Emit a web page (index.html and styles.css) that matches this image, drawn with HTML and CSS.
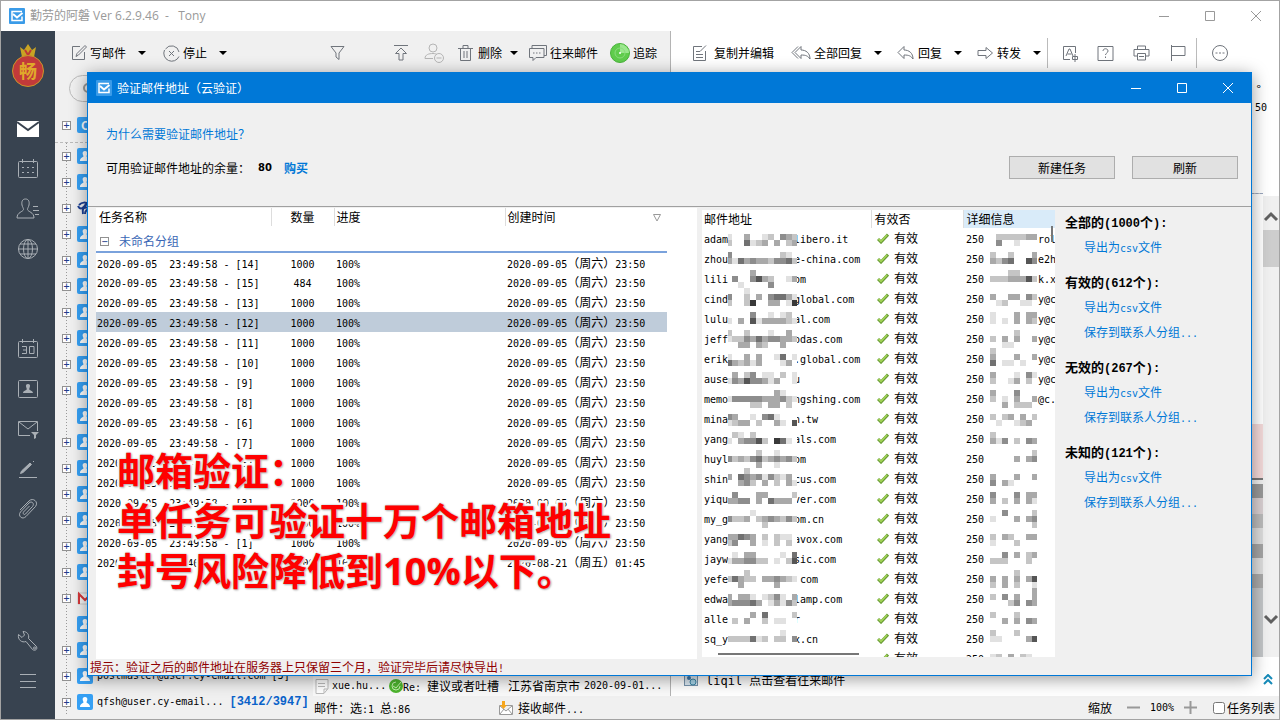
FILE: index.html
```html
<!DOCTYPE html>
<html lang="zh-CN">
<head>
<meta charset="utf-8">
<title>验证邮件地址（云验证）</title>
<link rel="stylesheet" href="styles.css">
</head>
<body>
<svg class="defs" aria-hidden="true">
  <defs>
    <symbol id="brand" viewBox="0 0 16 16"><rect width="16" height="16" rx="1" fill="#3a9be8"/><path d="M13 3.500H3v9h10V8.500" fill="none" stroke="#fff" stroke-width="1.500"/><path d="M4 6l4 3.500L13.500 5" fill="none" stroke="#fff" stroke-width="2"/></symbol>
    <symbol id="caret" viewBox="0 0 8 4"><path d="M0 0h8L4 4z" fill="#000"/></symbol>
    <symbol id="user" viewBox="0 0 16 16"><rect width="16" height="16" rx="2" fill="#36a0f4"/><path d="M8 3c2 0 2.600 1.400 2.300 3-.2 1-.6 1.500-.9 2.300.3 1 3.600 1.500 3.600 4.700H3c0-3.200 3.300-3.700 3.600-4.700-.3-.8-.7-1.300-.9-2.300C5.400 4.400 6 3 8 3z" fill="#fff"/></symbol>
    <symbol id="tick" viewBox="0 0 12 11"><path d="M1 6l3 3 7-7.500" fill="none" stroke="#6a9c35" stroke-width="3"/><path d="M1.500 6L4 8.500l6-6.500" fill="none" stroke="#a5d65a" stroke-width="1.500"/></symbol>
  </defs>
</svg>
<div class="app">
  <header class="titlebar">
    <svg class="i16"><use href="#brand"/></svg>
    <span class="app-name">勤劳的阿磐 Ver 6.2.9.46&nbsp; -&nbsp;&nbsp; Tony</span>
    <div class="wins">
      <button aria-label="最小化"><svg width="12" height="12"><path d="M1 6.500h10"/></svg></button>
      <button aria-label="最大化"><svg width="12" height="12"><path d="M1.500 1.500h9v9h-9z"/></svg></button>
      <button aria-label="关闭"><svg width="12" height="12"><path d="M1 1l10 10M11 1L1 11"/></svg></button>
    </div>
  </header>
  <div class="main">
    <nav class="side">
      <div class="logo">
        <svg width="18" height="14" viewBox="0 0 18 14"><path d="M1 4l4 3 4-6 4 6 4-3-2 10H3z" fill="#c9a423"/><path d="M6 7l3 5 3-5" fill="none" stroke="#c03a35" stroke-width="2"/></svg>
        <span>畅</span>
      </div>
      <button aria-label="邮件"><svg width="24" height="18" viewBox="0 0 24 18"><path d="M1 1h22v16H1z" fill="#fff" stroke="none"/><path d="M1 2l11 8 11-8" stroke="#384350" stroke-width="2"/></svg></button>
      <button aria-label="日历"><svg width="22" height="20" viewBox="0 0 22 20"><rect x="1.500" y="2.500" width="19" height="16" rx="1"/><path d="M5.500 0v4M16.500 0v4M5 8.500h2M10 8.500h2M15 8.500h2M5 13.500h2M10 13.500h2M15 13.500h2"/></svg></button>
      <button aria-label="联系人"><svg width="24" height="22" viewBox="0 0 24 22"><path d="M9.500 1C6 1 5.500 4 6 7c.4 2 1.500 3 1.500 4.500C7 14 1 14 1 20h17c0-6-6-6-6.500-8.500 0-1.500 1.100-2.500 1.500-4.500.5-3 0-6-3.500-6zM17 8.500h5M17 12.500h6M19 16.500h4"/></svg></button>
      <button aria-label="网络"><svg width="22" height="22" viewBox="0 0 22 22"><circle cx="11" cy="11" r="9.500"/><ellipse cx="11" cy="11" rx="4.500" ry="9.500"/><path d="M11 1v20M1 11h20M3 6h16M3 16h16"/></svg></button>
      <button class="gap" aria-label="日程"><svg width="22" height="20" viewBox="0 0 22 20"><rect x="1.500" y="2.500" width="19" height="16" rx="1"/><path d="M5.500 0v4M16.500 0v4M5 7.500h4.500v7H5M6 11h3.500M12.500 7.500H17v7h-4.500z"/></svg></button>
      <button aria-label="名片"><svg width="22" height="20" viewBox="0 0 22 20"><rect x="1.500" y="1.500" width="19" height="17" rx="1"/><path d="M11 5c2 0 2.500 1.500 1.700 3.500l-.5 1.500c0 1.500 3.800 1.500 3.800 4H6c0-2.500 3.800-2.500 3.800-4l-.5-1.500C8.500 6.500 9 5 11 5z" fill="#a9afb5" stroke="none"/></svg></button>
      <button aria-label="过滤"><svg width="24" height="20" viewBox="0 0 24 20"><path d="M14 16.500H2.500v-14h19V12M3 3l9 7 9-7"/><path d="M15 13h8l-3 3v3l-2 1v-4z" fill="#a9afb5" stroke="none"/></svg></button>
      <button aria-label="签名"><svg width="20" height="20" viewBox="0 0 20 20"><path d="M1 18.500h18"/><path d="M2.500 14.500l1-2.500L12 4l1.500 1.500L5 13.500zM15 3l1-1" fill="#a9afb5"/></svg></button>
      <button aria-label="附件"><svg width="20" height="22" viewBox="0 0 20 22"><path d="M2 12l9-9c4-4 10 1 6.500 5.500L8 18.500c-4 4-8.500-1-5.500-4.500l8.500-9c2.500-2.500 6 .5 3.500 3.500l-7 7.500c-1.500 1.500-3-.5-2-2l6-6"/></svg></button>
      <button class="push" aria-label="工具"><svg width="22" height="22" viewBox="0 0 22 22"><path d="M6 1.500c4 0 6.500 3 5.500 7l7.500 7.500c2.500 3-1 5.500-3.500 3.500L9 11.500c-4 1.500-8.500-1.500-7.500-7L5 7.500 7.500 5z"/><circle cx="17.500" cy="18" r="1"/></svg></button>
      <button aria-label="菜单"><svg width="18" height="14" viewBox="0 0 18 14"><path d="M1 .5h16M1 7.500h16M1 13.500h16"/></svg></button>
    </nav>
    <div class="content">
      <div class="bar bar-left">
        <button><svg width="16" height="16"><path d="M9 1.500H1.500v13h12V7M5 11.500l1-3 8-8 1.500 1.500-8 8z"/></svg>写邮件<svg class="caret"><use href="#caret"/></svg></button>
        <button><svg width="17" height="17"><path d="M2.500 4A7.500 7.500 0 0 1 16 7M16 11.500A7.500 7.500 0 1 1 1.500 5M6 6l5 5M11 6l-5 5"/></svg>停止<svg class="caret"><use href="#caret"/></svg></button>
        <button aria-label="筛选"><svg width="15" height="16"><path d="M1 1.500h13L9 8v6.500L6 12V8z"/></svg></button>
        <button aria-label="置顶"><svg width="14" height="16"><path d="M0 .5h14M7 3L1.500 8.500H5v6.500h4V8.500h3.500z"/></svg></button>
        <button aria-label="拉黑"><svg class="dim" width="20" height="20"><circle cx="9" cy="5" r="4"/><path d="M9 15.500H1c0-4 4-5 8-5 2 0 3 .5 4 1"/><circle cx="15" cy="15" r="4.500"/><path d="M12.500 15h5"/></svg></button>
        <button><svg width="15" height="16"><path d="M0 3.500h15M5 3V.5h5V3M2.500 4v11.500h10V4M6 6v7M9 6v7"/></svg><span class="del">删除</span><svg class="caret near"><use href="#caret"/></svg></button>
        <button><svg width="18" height="16"><path d="M3 3V.5h14.500v10H15M.5 3.500H15v9H7l-3 3v-3H.5zM4 8h1.500M7 8h1.500M10 8h1.500"/></svg>往来邮件</button>
        <button class="track"><svg width="20" height="20"><circle cx="10" cy="10" r="9.500" fill="#5fcc4c" stroke="#49b33b"/><path d="M10 10V1a9 9 0 0 1 9 9z" fill="#9be78e" stroke="none"/><circle cx="10" cy="10" r="5" stroke="#89dc7c"/><circle cx="10" cy="10" r="1" fill="#fff" stroke="none"/></svg>追踪</button>
      </div>
      <div class="bar bar-right">
        <button class="wide"><svg width="16" height="17"><path d="M10 1.500H1.500v14h12V6M4 6.500h4M4 9.500h7M4 12.500h7M8 6.500l6-6"/></svg>复制并编辑</button>
        <button><svg width="20" height="16"><path d="M7 1.500L1 7.500l6 6M10 1.500l-6 6 6 6V10c5 0 7 1 9 4 0-6-4-9-9-9z"/></svg>全部回复<svg class="caret"><use href="#caret"/></svg></button>
        <button><svg width="18" height="16"><path d="M7 1.500l-6 6 6 6V10c5 0 7 1 9 4 0-6-4-9-9-9z"/></svg>回复<svg class="caret"><use href="#caret"/></svg></button>
        <button><svg width="17" height="14"><path d="M1 4.500h8v-3L15.500 7 9 12.500v-3H1z"/></svg>转发<svg class="caret"><use href="#caret"/></svg></button>
        <button class="sep" aria-label="翻译"><svg width="17" height="17"><path d="M8 14.500H1.500v-13h12V8M4 11l3-7h1l3 7M5.500 9h4M13 9v8M10.500 11.500h5v3h-5z"/></svg></button>
        <button aria-label="帮助"><svg width="17" height="17"><path d="M1 1.500h15v14H1zM6 6c0-3 5-3 5 0 0 2-2.500 2-2.500 4M8.500 11.500v1.500"/></svg></button>
        <button aria-label="打印"><svg width="17" height="16"><path d="M4.500 4V1h8v3M4 11H1V4.500h15V11h-3M4.500 8.500h8V15h-8zM6 11.500h5"/></svg></button>
        <button aria-label="标记"><svg width="16" height="16"><path d="M1.500 0v16M2 1.500h13v9H2"/></svg></button>
        <button class="sep" aria-label="更多"><svg width="18" height="18"><circle cx="9" cy="9" r="7.500"/><path d="M4.500 9h2M8 9h2M11.500 9h2"/></svg></button>
      </div>
      <aside class="tree">
        <label class="search"><svg width="12" height="12"><circle cx="6" cy="5" r="4"/></svg><input type="search" aria-label="搜索"></label>
        <div class="node first"><i class="box">+</i><span class="ava">C</span></div>
        <div id="nodes" class="nodes"></div>
      </aside>
      <section class="list">
        <div class="mail">
          <svg width="14" height="15"><path d="M1 .5h12v9l-4 5H1z" fill="#fff" stroke="#bbb"/><path d="M3 4.500h7M3 7.500h7M9 14v-4h4" stroke="#bbb" fill="none"/></svg>
          <span class="m from">xue.hu...</span>
          <svg width="14" height="14"><circle cx="7" cy="7" r="7" fill="#4eb62f"/><path d="M4 7l3 2 5-6M7 3a4 4 0 1 0 4 4" stroke="#c4f0ae" fill="none"/></svg>
          <span class="subj"><span class="m">Re: </span>建议或者吐槽</span><span class="city">江苏省南京市</span><span class="m">2020-09-01...</span>
        </div>
      </section>
      <section class="reader">
        <div class="degree">°</div><div class="m fifty">50</div>
        <div class="strip"></div>
        <div class="scroll">
          <svg width="16" height="12"><path d="M2 9l6-6 6 6"/></svg>
          <div class="thumb"></div>
          <svg class="down" width="16" height="12"><path d="M2 3l6 6 6-6"/></svg>
        </div>
        <div class="contact">
          <svg width="14" height="14"><rect x=".5" y=".5" width="13" height="12" fill="#dce9f3" stroke="#7995ad"/><circle cx="5" cy="5" r="2" fill="#3c78ac"/><circle cx="9" cy="9" r="3" fill="#a8d5e9" stroke="#3c87a8"/></svg>
          <span><span class="mm">liqil </span>点击查看往来邮件</span>
          <svg class="more" width="10" height="12"><path d="M1 5l4-4 4 4M1 10l4-4 4 4"/></svg>
        </div>
      </section>
      <footer class="status">
        <span class="count">邮件：选<span class="m">:1 </span>总<span class="m">:86</span></span>
        <svg width="14" height="14"><path d="M.5 4.500h13v9H.5zM1 5l6 5 6-5M1 13l4-5M13 13L9 8" fill="#fff" stroke="#999"/><path d="M3 0h3v4h2L4.500 8 1 4h2z" fill="#f6a61c"/></svg>
        <span>接收邮件<span class="m">...</span></span>
        <span class="zoom">缩放</span>
        <button aria-label="缩小"><svg width="13" height="13"><path d="M0 6.500h13"/></svg></button>
        <span class="m">100%</span>
        <button aria-label="放大"><svg width="13" height="13"><path d="M0 6.500h13M6.500 0v13"/></svg></button>
        <label class="tasks"><input type="checkbox">任务列表</label>
      </footer>
    </div>
  </div>

  <div class="dialog" role="dialog" aria-labelledby="dlg">
    <header class="dlg-title">
      <svg class="i16"><use href="#brand"/></svg><span id="dlg">验证邮件地址（云验证）</span>
      <div class="wins">
        <button aria-label="最小化"><svg width="12" height="12"><path d="M1 6.500h10"/></svg></button>
        <button aria-label="最大化"><svg width="12" height="12"><path d="M1.500 1.500h9v9h-9z"/></svg></button>
        <button aria-label="关闭"><svg width="12" height="12"><path d="M1 1l10 10M11 1L1 11"/></svg></button>
      </div>
    </header>
    <div class="info">
      <a href="#">为什么需要验证邮件地址？</a>
      <div class="quota"><span>可用验证邮件地址的余量：</span><b>80</b><a class="buy" href="#">购买</a>
        <button class="btn first-btn">新建任务</button><button class="btn">刷新</button></div>
    </div>
    <div class="dlg-body">
      <div class="jobs">
        <table>
          <colgroup><col class="c-name"><col class="c-num"><col class="c-prog"><col class="c-date"></colgroup>
          <thead>
            <tr><th>任务名称</th><th class="num">数量</th><th>进度</th><th class="date">创建时间<svg width="8" height="8"><path d="M.5.500h7L4 7z" fill="none" stroke="#999"/></svg></th></tr>
            <tr class="group"><th colspan="4"><i class="box">−</i>未命名分组</th></tr>
          </thead>
          <tbody id="jobs"></tbody>
        </table>
      </div>
      <div class="emails">
        <table>
          <colgroup><col class="c-mail"><col class="c-ok"><col class="c-info"></colgroup>
          <thead><tr><th>邮件地址</th><th>有效否</th><th class="sorted">详细信息</th></tr></thead>
          <tbody id="emails"></tbody>
        </table>
        <svg id="mosaic" class="mosaic" width="353" height="447" aria-hidden="true"></svg>
      </div>
      <div class="export">
        <section><h2>全部的<span>(1000</span>个<span>):</span></h2><a href="#">导出为<span class="m">csv</span>文件</a></section>
        <section><h2>有效的<span>(612</span>个<span>):</span></h2><a href="#">导出为<span class="m">csv</span>文件</a><a href="#">保存到联系人分组<span class="m">...</span></a></section>
        <section><h2>无效的<span>(267</span>个<span>):</span></h2><a href="#">导出为<span class="m">csv</span>文件</a><a href="#">保存到联系人分组<span class="m">...</span></a></section>
        <section><h2>未知的<span>(121</span>个<span>):</span></h2><a href="#">导出为<span class="m">csv</span>文件</a><a href="#">保存到联系人分组<span class="m">...</span></a></section>
      </div>
    </div>
    <p class="hint">提示：验证之后的邮件地址在服务器上只保留三个月，验证完毕后请尽快导出<span class="m">!</span></p>
  </div>
  <div class="caption">邮箱验证：<br>单任务可验证十万个邮箱地址<br>封号风险降低到10%以下。</div>
</div>
<script src="app.js"></script>
</body>
</html>
```

FILE: styles.css
```css
* { box-sizing: border-box; }
body {
  margin: 0;
  font: 12px/16px "Noto Sans CJK SC", sans-serif;
  color: #000;
}
button {
  font: inherit;
  color: inherit;
  background: none;
  border: 0;
  padding: 0;
}
a { color: #0078d7; text-decoration: none; }
svg { flex: none; }
.defs { position: absolute; width: 0; height: 0; }
.m { font-family: "DejaVu Sans Mono", "Noto Sans CJK SC", monospace; font-size: 10px; line-height: 10px; white-space: pre; }
.mm { font-family: "DejaVu Sans Mono", monospace; font-size: 12px; line-height: 12px; white-space: pre; }
.i16 { width: 16px; height: 16px; }

.app {
  position: relative;
  height: 100vh;
  min-height: 600px;
  display: flex;
  flex-direction: column;
  border: 1px solid #a3a3a3;
  background: #fff;
  overflow: hidden;
}
.titlebar {
  height: 30px;
  display: flex;
  align-items: center;
  gap: 5px;
  padding-left: 8px;
  color: #999;
}
.app-name { font-family: "Open Sans", "Noto Sans CJK SC", sans-serif; }
.wins { margin-left: auto; display: flex; }
.wins button { width: 46px; height: 30px; display: grid; place-items: center; }
.wins path { fill: none; stroke: #999; }
.main { flex: 1; display: flex; min-height: 0; }

.side {
  width: 54px;
  background: #384350;
  display: flex;
  flex-direction: column;
  align-items: center;
  padding-bottom: 18px;
}
.side button { height: 40px; width: 54px; display: grid; place-items: center; }
.side svg { fill: none; stroke: #a9afb5; }
.side .gap { margin-top: 60px; }
.side .push { margin-top: auto; }
.logo {
  height: 78px;
  padding-top: 12px;
  display: flex;
  flex-direction: column;
  align-items: center;
}
.logo svg { stroke: none; }
.logo span {
  width: 32px;
  height: 32px;
  margin-top: -2px;
  border-radius: 50%;
  border: 1px solid #c9972a;
  background: #c23a3a;
  color: #e0a92a;
  font-size: 18px;
  font-weight: bold;
  line-height: 29px;
  text-align: center;
}

.content {
  flex: 1;
  display: grid;
  grid-template: 44px minmax(0, 1fr) 23px / 258px 358px minmax(0, 1fr);
  min-width: 0;
}
.bar { display: grid; align-items: center; white-space: nowrap; }
.bar button { display: flex; align-items: center; gap: 3px; height: 30px; }
.bar svg { fill: none; stroke: #70757c; }
.bar svg.dim { stroke: #b5b5b5; }
.bar svg.caret { width: 8px; height: 4px; margin-left: 9px; stroke: none; }
.bar svg.near { margin-left: 5px; }
.bar .del { padding-left: 2px; }
.bar-left {
  grid-column: 1 / 3;
  grid-template-columns: 92px 167px 64px 30px 34px 71px 81px 1fr;
  padding-left: 16px;
  background: #f0f0f0;
  border-right: 1px solid #b4b4b4;
}
.bar-right { grid-template-columns: 99px 106px 80px 70px 50px 36px 37px 26px 1fr; padding-left: 21px; }
.bar-right .wide { gap: 6px; }
.bar-right .sep { border-left: 1px solid #bbb; padding-left: 14px; }

.tree { grid-row: 2 / 4; background: #f0f0f0; overflow: hidden; }
.search {
  display: flex;
  align-items: center;
  height: 27px;
  margin-left: 14px;
  padding-left: 12px;
  border: 1px solid #bbb;
  border-radius: 14px;
}
.search svg { fill: none; stroke: #999; stroke-width: 2; }
.search input { flex: 1; min-width: 0; border: 0; background: none; outline: 0; }
.node { display: flex; align-items: center; height: 26px; padding-left: 7px; white-space: nowrap; }
.first { margin-top: 10px; }
.nodes {
  margin-top: 4px;
  border-top: 1px dashed #bbb;
  background: linear-gradient(#999 1px, transparent 1px) 11px 0 / 1px 3px repeat-y;
}
.box {
  width: 9px;
  height: 9px;
  border: 1px solid #919191;
  background: #fff;
  color: #223c8c;
  font: 10px/7px "DejaVu Sans Mono", monospace;
  text-align: center;
}
.box.none { visibility: hidden; }
.node svg, .ava { width: 16px; height: 16px; margin: 0 4px 0 6px; }
.ava { background: #36a0f4; border-radius: 2px; color: #fff; text-align: center; font-weight: bold; }
.unread { color: #0a62c9; font-size: 12px; font-weight: bold; margin-left: 6px; font-family: "Liberation Mono", monospace; }

.list { display: flex; flex-direction: column; justify-content: flex-end; background: #fff; border-right: 1px solid #b4b4b4; min-width: 0; }
.mail { display: flex; align-items: center; height: 20px; padding-left: 2px; background: #f9f9f9; white-space: nowrap; }
.mail .from { width: 59px; padding-left: 2px; margin-left: 1px; }
.subj { width: 105px; }
.city { width: 76px; }

.reader { position: relative; overflow: hidden; }
.degree { position: absolute; right: 18px; top: 6px; }
.fifty { position: absolute; right: 12px; top: 28px; }
.strip {
  position: absolute;
  right: 16px;
  top: 118px;
  width: 12px;
  bottom: 39px;
  border-top: 1px dashed #9aa6bd;
  background: linear-gradient(#fff 230px, #f4dada 230px 284px, #777 284px 286px, #f0f0f0 286px 290px, #999 290px 304px, #d9d0d2 304px 320px, #bbb 320px 334px, #ddd 334px 350px, #a5a5a5 350px 364px, #ddd 364px 380px, #aaa 380px 394px, #c3c6c8 394px);
}
.scroll {
  position: absolute;
  right: 0;
  top: 121px;
  bottom: 39px;
  width: 16px;
  padding: 15px 0 32px;
  display: flex;
  flex-direction: column;
  background: #f0f0f0;
}
.scroll svg { fill: none; stroke: #606060; stroke-width: 3; }
.scroll .thumb { height: 37px; margin-top: 7px; background: #cdcdcd; }
.scroll .down { margin-top: auto; }
.contact {
  position: absolute;
  left: 13px;
  right: 6px;
  bottom: 8px;
  display: flex;
  align-items: center;
  gap: 8px;
}
.contact .more { margin-left: auto; fill: none; stroke: #168ab8; stroke-width: 2; }

.status {
  grid-column: 2 / 4;
  display: flex;
  align-items: center;
  background: #f0f0f0;
  padding: 0 4px 0 1px;
  gap: 5px;
}
.status .count { width: 180px; }
.status .zoom { margin-left: auto; }
.status button { height: 16px; padding: 0 5px; display: flex; align-items: center; }
.status .zoom + button { padding-left: 10px; }
.status button path { stroke: #999; stroke-width: 2; }
.tasks { display: flex; align-items: center; margin-left: 6px; }
.tasks input { width: 12px; height: 12px; margin: 0 2px 0 0; }

.dialog {
  position: absolute;
  inset: 71px 27px 43px 86px;
  display: flex;
  flex-direction: column;
  border: 1px solid #0078d7;
  background: #f0f0f0;
  box-shadow: 0 3px 16px rgba(0, 0, 0, .4);
}
.dlg-title {
  height: 30px;
  flex: none;
  display: flex;
  align-items: center;
  gap: 5px;
  padding-left: 8px;
  background: #0078d7;
  color: #fff;
}
.dlg-title .wins path { stroke: #fff; }
.info {
  height: 104px;
  flex: none;
  padding: 20px 13px 0 18px;
  border-bottom: 1px solid #a0a0a0;
}
.info > a { display: block; height: 33px; line-height: 22px; }
.quota { display: flex; align-items: center; height: 23px; }
.quota b { margin-left: 8px; font-family: "DejaVu Sans", sans-serif; font-size: 10px; }
.buy { font-weight: bold; margin-left: 12px; }
.btn { width: 106px; height: 23px; border: 1px solid #adadad; background: #e1e1e1; margin-left: 17px; }
.first-btn { margin-left: auto; }
.dlg-body { flex: 1; min-height: 0; display: flex; padding-left: 8px; }
table { border-collapse: collapse; table-layout: fixed; }
th { font-weight: normal; text-align: left; }
th, td { padding: 0; height: 20px; white-space: nowrap; line-height: 16px; }
.jobs { flex: 1; min-width: 0; margin-top: 1px; background: #fff; overflow: hidden; }
.jobs table { width: 571px; }
.c-name { width: 175px; }
.c-num { width: 63px; }
.c-prog { width: 171px; }
.c-date { width: 162px; }
.jobs th { padding-left: 3px; height: 18px; }
.jobs th + th { border-left: 1px solid #ddd; padding-left: 2px; }
.jobs td { padding-left: 1px; }
.jobs td + td { padding-left: 2px; }
.jobs .num { text-align: center; padding: 0; }
.date svg { margin-left: 97px; }
.jobs .group th { height: 26px; padding: 5px 0 0 3px; color: #3a67b5; border-bottom: 2px solid #7aa2dc; }
.group .box { display: inline-block; margin: 0 10px 0 1px; vertical-align: 1px; font-style: normal; }
.selected { background: #bfccda; }
.emails { position: relative; width: 353px; flex: none; margin: 3px 0 2px 5px; background: #fff; overflow: hidden; }
.emails table { width: 353px; }
.emails th { height: 18px; padding-left: 2px; border-right: 1px solid #ddd; }
.emails th + th { padding-left: 3px; }
.emails .sorted { background: #d9ebf9; border: 0; }
.emails td { padding-left: 2px; overflow: hidden; }
.emails td + td { padding-left: 6px; }
.emails td:last-child { padding-left: 3px; }
.emails td svg { width: 12px; height: 11px; margin-right: 5px; vertical-align: -1px; }
.head { display: inline-block; width: 90px; }
.code { display: inline-block; width: 72px; }
.c-mail { width: 169px; }
.c-ok { width: 92px; }
.c-info { width: 92px; }
.mosaic { position: absolute; left: 0; top: 0; }
.export { width: 196px; flex: none; padding: 2px 0 0 10px; }
.export section { margin-bottom: 10px; }
.export h2 { margin: 0; font-size: 13px; line-height: 25px; }
.export h2 span { font-family: "Liberation Mono", monospace; font-size: 12px; line-height: 12px; }
.export a { display: block; padding-left: 19px; line-height: 25px; }
.hint { flex: none; margin: 0; padding-left: 2px; color: #900000; line-height: 16px; }
.caption {
  position: absolute;
  left: 116px;
  top: 444px;
  font: bold 38px/50px "Open Sans", "Noto Sans CJK SC", sans-serif;
  color: #f00;
  -webkit-text-stroke: 5px #fff;
  paint-order: stroke fill;
  text-shadow: 0 0 2px #aaa, 1px 1px 2px #bbb;
  white-space: nowrap;
  pointer-events: none;
}
```

FILE: app.js
```js
const mono = (text) => text.replace(/[\x20-\x7e]+/g, (run) => `<span class="m">${run}</span>`);

const userIcon = '<svg><use href="#user"/></svg>';
const waveIcon = '<svg viewBox="0 0 16 16"><path d="M2 5c3-3 7-3 9-1M1 6c2 4 5 3 8-2M6 14c-1-5 1-9 6-11M7 8c3-1 5 0 6 2M8 14c0-3 2-5 6-5" fill="none" stroke="#1c3f94" stroke-width="2"/></svg>';
const gmailIcon = '<svg viewBox="0 0 16 16"><path d="M1 3h14v11H1z" fill="#f5f5f5" stroke="#ccc"/><path d="M2 14V4l6 6 6-6v10" fill="none" stroke="#d5373a" stroke-width="2"/></svg>';
const labels = {
  20: mono('postmaster@user.cy-email.com [3]'),
  21: mono('qfsh@user.cy-email...') + '<span class="unread">[3412/3947]</span>'
};
document.getElementById('nodes').innerHTML = Array.from({ length: 22 }, (_, i) => {
  const icon = i === 2 ? waveIcon : i === 17 ? gmailIcon : userIcon;
  const leaf = i === 10 || i === 18 ? ' none' : '';
  return `<div class="node"><i class="box${leaf}">+</i>${icon}${labels[i] || ''}</div>`;
}).join('');

const jobs = [14, 15, 13, 12, 11, 10, 9, 8, 6, 7, 5, 4, 3, 2, 1].map((n) => ({
  name: `2020-09-05  23:49:58 - [${n}]`,
  count: n === 15 ? 484 : 1000,
  date: '2020-09-05（周六）23:50',
  selected: n === 12
}));
jobs.push({ name: '2020-08-21  01:40', count: 1000, date: '2020-08-21（周五）01:45' });
document.getElementById('jobs').innerHTML = jobs.map((j) =>
  `<tr${j.selected ? ' class="selected"' : ''}><td>${mono(j.name)}</td><td class="num">${mono(String(j.count))}</td><td>${mono('100%')}</td><td>${mono(j.date)}</td></tr>`
).join('');

// [address start, address end, detail end, address blocks, detail blocks]; blocks begin with their y in 6px steps
const emails = [
  ['adam', 'libero.it', 'rol', [4, '100300120432', '200512303023'], [4, '02222233', '04001000']],
  ['zhou', 'e-china.com', 'e2h', [7, '400000000210', '315343324452'], [7, '20020003', '32450064']],
  ['lili', 'om', 'k.x', [10, '000030000000', '040046320013', '001000040000', '000100000000'], [10, '00022000', '22233362']],
  ['cind', 'global.com', 'y@c', [14, '400203045531', '200270033017'], [14, '30033042', '01200110']],
  ['lulu', 'al.com', 'y@c', [17, '000040010120', '103061333321'], [17, '10003033', '10103032']],
  ['jeff', 'odas.com', 'y@c', [20, '200200010030', '122435344332', '003303200300'], [20, '00002000', '20303003', '00110000']],
  ['erik', '.global.com', 'y@c', [24, '100303001501', '532313000130'], [23, '20000000', '30003003', '50110100']],
  ['ause', 'u', 'y@c', [27, '030240110201', '143644313001'], [27, '30001041', '20013020']],
  ['memo', 'ngshing.com', '@c.', [30, '000000003100', '144444333421', '000022033020'], [30, '30004000', '20103003', '00302220']],
  ['mina', 'n.tw', '', [34, '430010451000', '123302003106'], [34, '20230302', '01001230']],
  ['yang', 'als.com', '', [37, '021020000000', '103446207510'], [37, '20000000', '31402043']],
  ['huyl', 'om', '', [40, '000002001000', '423245234342', '000003001000'], [40, '00000002', '00003034']],
  ['shin', 'cus.com', '', [43, '000200000000', '305434142130', '003420302031'], [44, '30003003', '40310000']],
  ['yiqu', 'ver.com', '', [47, '040003300002', '334403053330'], [47, '40004033', '30203031']],
  ['my_g', 'om.cn', '', [50, '000010000000', '422302343242', '000000200000'], [50, '00400002', '10003034', '00000002']],
  ['yang', 'avox.com', '', [54, '335430202110', '240030102020'], [54, '20320033', '10002000']],
  ['jayw', 'sic.com', '', [57, '010330000105', '133442201026'], [57, '00403023', '22200020']],
  ['yefe', ' com', '', [60, '000200000000', '253220334321', '003000003000'], [60, '00002000', '30303036', '20302001']],
  ['edwa', 'lamp.com', '', [64, '303310124103', '344453013142'], [63, '00000003', '20403003', '00024043']],
  ['alle', 'r', '', [67, '000030500002', '020300201100'], [67, '20002000', '00303043']],
  ['sq_y', 'x.cn', '', [70, '000000000100', '222251202204'], [70, '20002000', '11000036']],
  ['', '', '', [74, '000000000000'], [74, '12030210']]
];
document.getElementById('emails').innerHTML = emails.map(([a, b, c]) =>
  `<tr><td><span class="m head">${a}</span>${mono(b)}</td><td><svg><use href="#tick"/></svg>有效</td><td><span class="m code">250</span>${mono(c)}</td></tr>`
).join('');

const shades = ['#fff', '#e1e1e1', '#c5c5c5', '#a9a9a9', '#8d8d8d', '#717171', '#555', '#393939'];
const blocks = (x, [row, ...lines], last) => lines.map((line, r) => [...line].map((v, c) =>
  v === '0' ? '' : `<rect x="${Math.max(x + c * 6, 26)}" y="${(row + r) * 6}" width="${x + c * 6 < 26 ? 4 : c === last ? 5 : 6}" height="6" fill="${shades[v]}"/>`
).join('')).join('');
document.getElementById('mosaic').innerHTML =
  '<rect x="26" y="20" width="69" height="423" fill="#fff"/><rect x="288" y="20" width="47" height="427" fill="#fff"/>' +
  emails.map((e) => blocks(24, e[3], 11) + blocks(288, e[4], 7)).join('') +
  '<rect x="16" y="443" width="141" height="2" fill="#777"/><rect x="349" y="16" width="2" height="16" fill="#777"/>';
```
